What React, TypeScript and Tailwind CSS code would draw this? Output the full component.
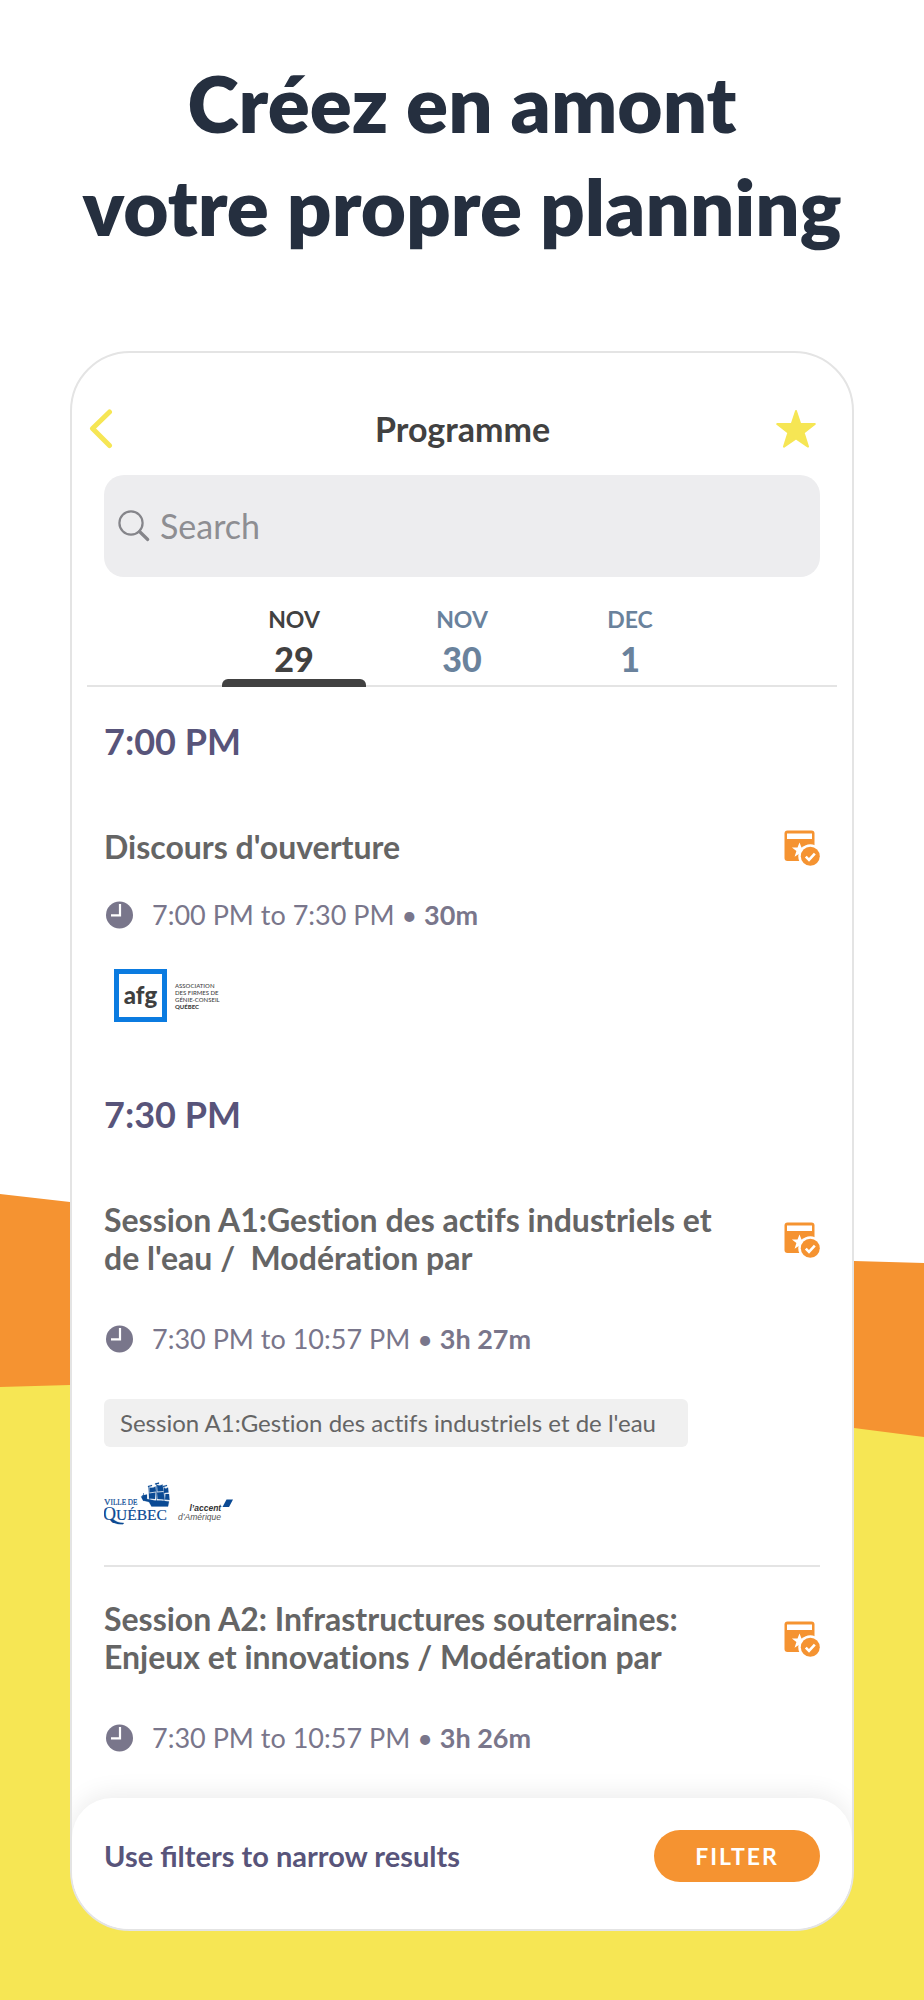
import React from "react";

type Day = { month: string; day: string; active?: boolean };

const days: Day[] = [
  { month: "NOV", day: "29", active: true },
  { month: "NOV", day: "30" },
  { month: "DEC", day: "1" },
];

function Backdrop() {
  return (
    <svg
      className="absolute inset-0 h-full w-full"
      viewBox="0 0 924 2000"
      preserveAspectRatio="none"
      aria-hidden="true"
    >
      <polygon points="0,1194 70,1202 462,1257 854,1261 924,1263 924,1500 0,1500" fill="#f59331" />
      <polygon points="0,1387 70,1385 462,1380 854,1428 924,1437 924,2000 0,2000" fill="#f6e654" />
    </svg>
  );
}

function BackIcon() {
  return (
    <svg className="h-10 w-6" viewBox="0 0 24 40" fill="none" aria-hidden="true">
      <path d="M20.500 3 3.500 19.500l17 17" stroke="#f6e654" strokeWidth="5" strokeLinecap="round" strokeLinejoin="round" />
    </svg>
  );
}

function StarIcon() {
  return (
    <svg className="h-10 w-10" viewBox="0 0 40 40" aria-hidden="true">
      <path
        d="M20 2 24.300 15H38.800L27.600 23.600 32 37.600 20 29.400 8 37.600 12.400 23.600 1.200 15H15.700Z"
        fill="#f6e654"
        stroke="#f6e654"
        strokeWidth="2"
        strokeLinejoin="round"
      />
    </svg>
  );
}

function SearchIcon() {
  return (
    <svg className="h-8 w-8 shrink-0" viewBox="0 0 32 32" fill="none" stroke="#85858a" aria-hidden="true">
      <circle cx="13" cy="13" r="11.600" strokeWidth="2.200" />
      <path d="m21.500 21.500 8.200 8" strokeWidth="3.200" strokeLinecap="round" />
    </svg>
  );
}

function ClockIcon() {
  return (
    <svg className="mx-0.5 h-7 w-7 shrink-0" viewBox="0 0 28 28" aria-hidden="true">
      <circle cx="13.500" cy="14" r="13.500" fill="#79768b" />
      <path d="M14 3V14.300H5" fill="none" stroke="#fff" strokeWidth="2.200" />
    </svg>
  );
}

function AgendaIcon() {
  return (
    <svg className="h-[38px] w-9" viewBox="0 -2 36 38" aria-hidden="true">
      <rect x="0.500" y="0.500" width="30" height="30.500" rx="3" fill="#f59331" />
      <rect x="3" y="3.500" width="25" height="5.500" fill="#fff" />
      <path d="m15.500 12.500 2 5h5.500l-4.500 3.500 1.800 5.800-4.800-3.300-4.900 3.300 1.800-5.800L7.900 17.500h5.600Z" fill="#fff" />
      <circle cx="26.300" cy="26.300" r="12" fill="#fff" />
      <circle cx="26.300" cy="26.300" r="9.500" fill="#f59331" />
      <path d="m21.800 26.600 3.200 3.200 5.800-6.200" fill="none" stroke="#fff" strokeWidth="2.600" />
    </svg>
  );
}

function AfgLogo() {
  return (
    <div className="flex h-[53px] items-center gap-2 pl-2.5 text-[#3f3f3f]">
      <span className="flex h-[53px] w-[53px] items-center justify-center border-[5px] border-[#0b7be0] pb-0.5 text-[24px] leading-none font-black">
        afg
      </span>
      <span className="text-[6px] leading-[7px] font-medium">
        ASSOCIATION
        <br />
        DES FIRMES DE
        <br />
        GÉNIE-CONSEIL
        <br />
        <b className="font-black">QUÉBEC</b>
      </span>
    </div>
  );
}

function QuebecLogo() {
  return (
    <svg className="h-[43px] w-[130px]" viewBox="0 0 130 43" role="img" aria-label="Ville de Québec, l'accent d'Amérique">
      <g fill="#0a4a94" stroke="#0a4a94" strokeWidth="0.200">
        <text x="0" y="23" fontSize="9" fontFamily="Liberation Serif, serif">
          V<tspan fontSize="7.200">ILLE DE</tspan>
        </text>
        <text x="-1" y="37.500" fontSize="18" fontFamily="Liberation Serif, serif">
          Q<tspan fontSize="15.500">UÉBEC</tspan>
        </text>
        <path d="M9 37q4 4 11 4l-1 1.200Q10 43 6 37.500Z" />
        <path d="M37 14.500h5l1 2.500 8 1.500h6l8 1-1 5H47.500L45 20l-6-1.500Z" />
        <path d="M45.500 5.500q3 1 6-1l.5 5-6.500 1ZM53 3q3 1 5.500-.5l1 6.500-6 .5ZM60 6q2 1 4-.5l.5 5-4.500.5ZM45 11.500l6.500-1-.5 6.500-6-.5ZM53 10.500l6.500-.5 1 7.500-7-.5ZM61.500 12h3.500l.5 6-4.500-.5Z" />
        <path d="M38 13.500l5-1v4l-4 .5ZM51 1.500l4-1v1.200l-4 .8ZM44 4l4-1v1l-4 1ZM59 4l4-1v1l-4 1Z" />
      </g>
      <path
        d="M44.500 4 46 20M52.500 1v18M60 4v15M39.500 11v8"
        fill="none"
        stroke="#0a4a94"
        strokeWidth="0.600"
      />
      <text x="85.500" y="29" fontSize="8.500" fontWeight="700" fontStyle="italic" fill="#333" fontFamily="Liberation Sans, sans-serif">
        l’accent
      </text>
      <text x="74" y="37.500" fontSize="8.500" fontStyle="italic" fill="#555" fontFamily="Liberation Sans, sans-serif">
        d’Amérique
      </text>
      <path d="M122.500 17.500h6.500l-4 7.500h-6.500Z" fill="#0a4a94" />
    </svg>
  );
}

function TimeRow({ range, length }: { range: string; length: string }) {
  return (
    <p className="flex items-center gap-4 text-[27px] leading-[38px] text-[#79768b]">
      <ClockIcon />
      <span>
        {range} • <b>{length}</b>
      </span>
    </p>
  );
}

function SessionTitle({ children }: { children: React.ReactNode }) {
  return (
    <div className="flex items-center justify-between gap-4">
      <h3 className="text-[32px] leading-[38px] font-bold text-[#656565]">{children}</h3>
      <button type="button" aria-label="Ajouter au planning" className="shrink-0">
        <AgendaIcon />
      </button>
    </div>
  );
}

function SlotHeading({ children }: { children: React.ReactNode }) {
  return <h2 className="text-[36px] leading-[38px] font-bold text-[#58547a]">{children}</h2>;
}

export default function App() {
  return (
    <div className="relative min-h-screen bg-white pb-[69px] font-['Lato','Noto_Sans',sans-serif]">
      <Backdrop />
      <div className="relative px-[70px] pt-[52px]">
        <h1 className="-mx-10 text-center text-[78px] leading-[103px] font-extrabold text-[#252f3f]">
          Créez en amont
          <br />
          votre propre planning
        </h1>

        <main className="mt-[93px] overflow-hidden rounded-[60px] border-2 border-[#e4e4e4] bg-white">
          <header className="grid h-[122px] grid-cols-[1fr_auto_1fr] items-center pt-[30px] pr-9 pl-[17px]">
            <button type="button" aria-label="Retour" className="justify-self-start">
              <BackIcon />
            </button>
            <h2 className="pl-5 text-[34px] leading-10 font-bold text-[#414141]">Programme</h2>
            <button type="button" aria-label="Favoris" className="justify-self-end">
              <StarIcon />
            </button>
          </header>

          <label className="mx-8 flex h-[102px] items-center gap-2.5 rounded-[20px] bg-[#ededef] px-3.5">
            <SearchIcon />
            <input
              type="search"
              aria-label="Search"
              placeholder="Search"
              className="w-full min-w-0 bg-transparent text-[34px] leading-10 text-[#414141] outline-none placeholder:text-[#8e8e92]"
            />
          </label>

          <nav className="mx-[15px] flex h-[110px] items-end justify-center gap-6 border-b-2 border-[#e4e4e4]">
            {days.map((d) => (
              <button
                key={d.month + d.day}
                type="button"
                className={
                  d.active
                    ? "-mb-0.5 flex w-36 flex-col items-center text-[#414141]"
                    : "-mb-0.5 flex w-36 flex-col items-center text-[#6a829c]"
                }
              >
                <span className="text-[23px] leading-8 font-bold">{d.month}</span>
                <span className="mt-1.5 text-[34px] leading-9 font-black">{d.day}</span>
                <span
                  className={
                    d.active ? "mt-0.5 h-2 w-full rounded-t-md bg-[#414141]" : "mt-0.5 h-2 w-full"
                  }
                />
              </button>
            ))}
          </nav>

          <div className="px-8 pt-[35px] pb-[41px] [font-variant-ligatures:no-common-ligatures]">
            <section>
              <SlotHeading>7:00 PM</SlotHeading>
              <article className="mt-[68px]">
                <SessionTitle>Discours d'ouverture</SessionTitle>
                <div className="mt-[30px]">
                  <TimeRow range="7:00 PM to 7:30 PM" length="30m" />
                </div>
                <div className="mt-[35px]">
                  <AfgLogo />
                </div>
              </article>
            </section>

            <section className="mt-[73px]">
              <SlotHeading>7:30 PM</SlotHeading>
              <article className="mt-[68px] border-b-2 border-[#e4e4e4] pb-10">
                <SessionTitle>
                  Session A1:Gestion des actifs industriels et
                  <br />
                  de l'eau /&nbsp; Modération par
                </SessionTitle>
                <div className="mt-[43px]">
                  <TimeRow range="7:30 PM to 10:57 PM" length="3h 27m" />
                </div>
                <p className="mt-[41px] w-fit rounded-md bg-[#f0f0f0] pr-8 pl-4 text-2xl leading-[48px] text-[#656565]">
                  Session A1:Gestion des actifs industriels et de l'eau
                </p>
                <div className="mt-[35px] flex">
                  <QuebecLogo />
                </div>
              </article>
              <article className="mt-[33px]">
                <SessionTitle>
                  Session A2: Infrastructures souterraines:
                  <br />
                  Enjeux et innovations / Modération par
                </SessionTitle>
                <div className="mt-[43px]">
                  <TimeRow range="7:30 PM to 10:57 PM" length="3h 26m" />
                </div>
              </article>
            </section>
          </div>

          <footer className="flex items-center justify-between rounded-t-[40px] bg-white px-8 pt-8 pb-[47px] shadow-[0_-4px_24px_rgba(0,0,0,0.08)]">
            <p className="text-[29px] leading-9 font-bold text-[#58547a]">Use filters to narrow results</p>
            <button
              type="button"
              className="h-[52px] w-[166px] rounded-full bg-[#f59331] text-[23px] font-bold tracking-[2px] text-white"
            >
              FILTER
            </button>
          </footer>
        </main>
      </div>
    </div>
  );
}
